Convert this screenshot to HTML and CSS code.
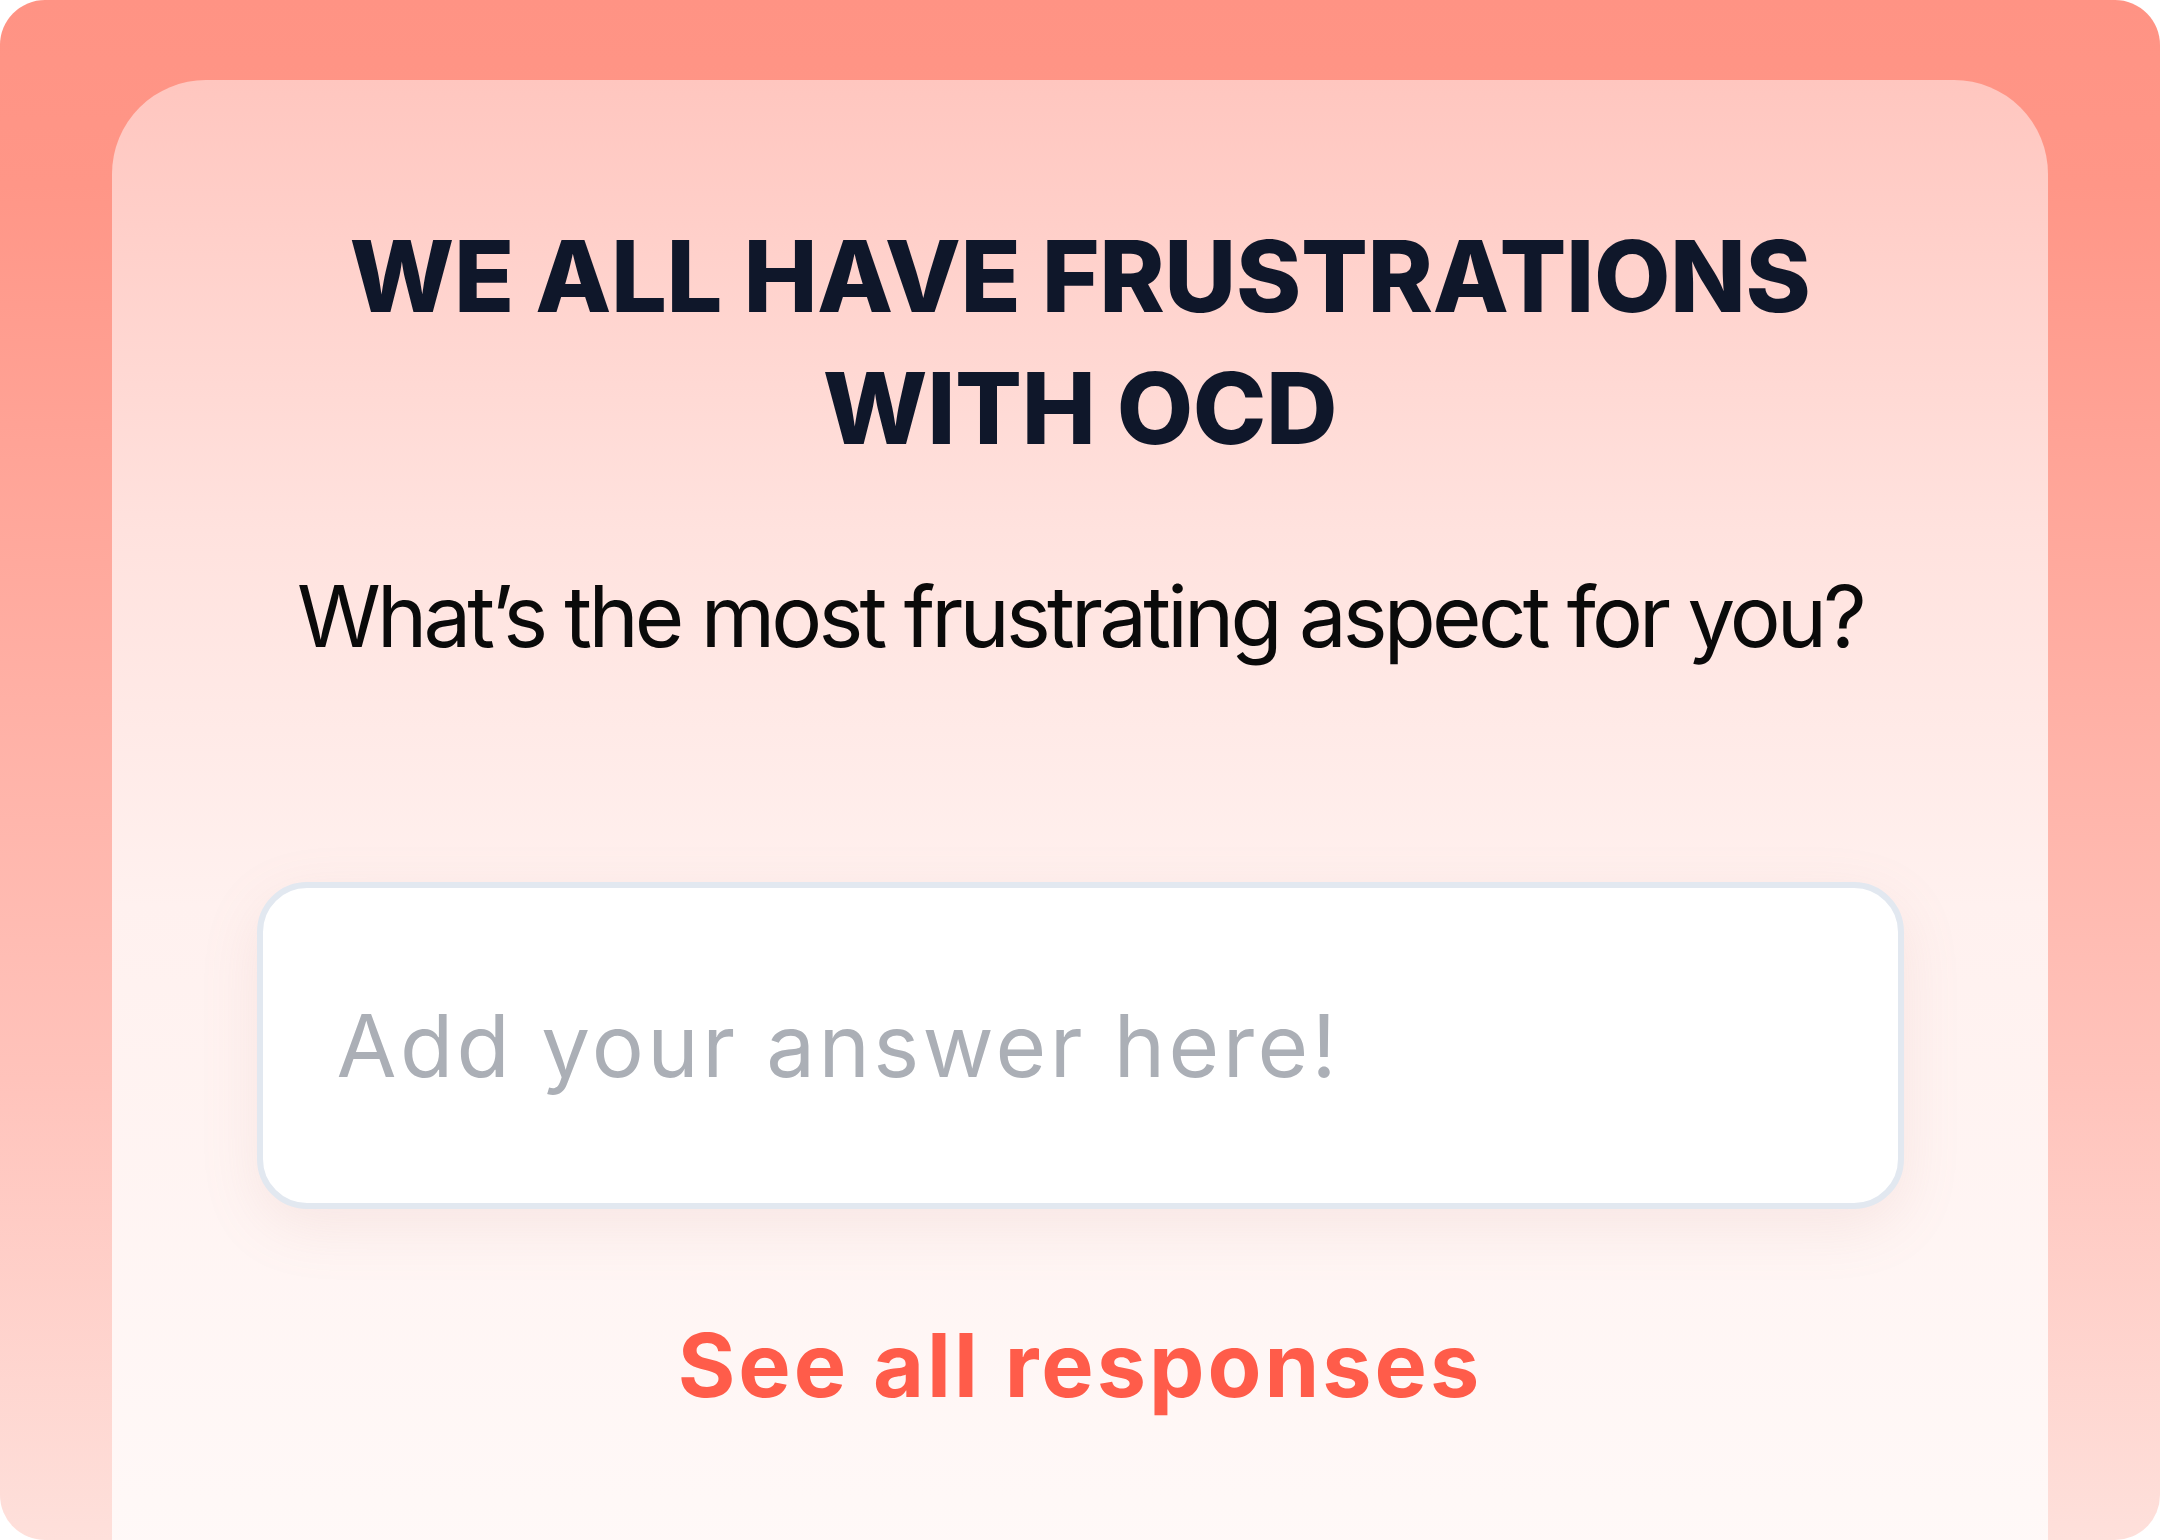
FILE: index.html
```html
<!DOCTYPE html>
<html lang="en">
<head>
<meta charset="utf-8">
<title>Frustrations with OCD</title>
<link rel="stylesheet" href="styles.css">
</head>
<body>
<div class="frame">
  <main class="card">
    <h1 class="title">WE ALL HAVE FRUSTRATIONS<br>WITH OCD</h1>
    <p class="question">What’s the most frustrating aspect for you?</p>
    <input class="answer" type="text" placeholder="Add your answer here!">
    <a class="see-all" href="#">See all responses</a>
  </main>
</div>
</body>
</html>
```
FILE: styles.css
```css
html, body {
  margin: 0;
  padding: 0;
  background: #ffffff;
}
.frame {
  box-sizing: border-box;
  width: 2160px;
  height: 1540px;
  border-radius: 45px;
  overflow: hidden;
  padding: 80px 112px 0;
  background: linear-gradient(180deg, #ff9384 0%, #ff9687 12%, #ffc3bb 70%, #fee0db 100%);
}
.card {
  box-sizing: border-box;
  height: 1500px;
  border-radius: 94px 94px 0 0;
  background: linear-gradient(180deg, #ffc6bf 0%, #ffe2de 30%, #fff1ef 55%, #fff9f8 100%);
  display: flex;
  flex-direction: column;
  align-items: center;
  padding-top: 130px;
}
.title {
  margin: 0;
  font-family: "Inter", "Liberation Sans", sans-serif;
  font-weight: 800;
  font-size: 99px;
  line-height: 132px;
  letter-spacing: -0.4px;
  color: #0f172a;
  text-align: center;
}
.question {
  margin: 92px 0 0;
  font-family: "Inter", "Liberation Sans", sans-serif;
  font-weight: 400;
  font-size: 85px;
  line-height: 102px;
  letter-spacing: -3.8px;
  color: #0a0a0a;
  text-align: center;
}
.answer {
  box-sizing: border-box;
  margin-top: 214px;
  width: 1647px;
  height: 327px;
  border: 6px solid #e2e8f0;
  border-radius: 50px;
  padding: 0 74px;
  background: #ffffff;
  box-shadow: 0 18px 60px rgba(190, 130, 125, 0.12);
  font-family: "Inter", "Liberation Sans", sans-serif;
  font-size: 87px;
  letter-spacing: 3.4px;
  color: #333;
  outline: none;
}
.answer::placeholder {
  color: #abafb6;
  opacity: 1;
}
.see-all {
  margin-top: 103px;
  font-family: "Inter", "Liberation Sans", sans-serif;
  font-weight: 700;
  font-size: 88px;
  line-height: 106px;
  letter-spacing: 3px;
  color: #ff5c4a;
  text-decoration: none;
}
```
